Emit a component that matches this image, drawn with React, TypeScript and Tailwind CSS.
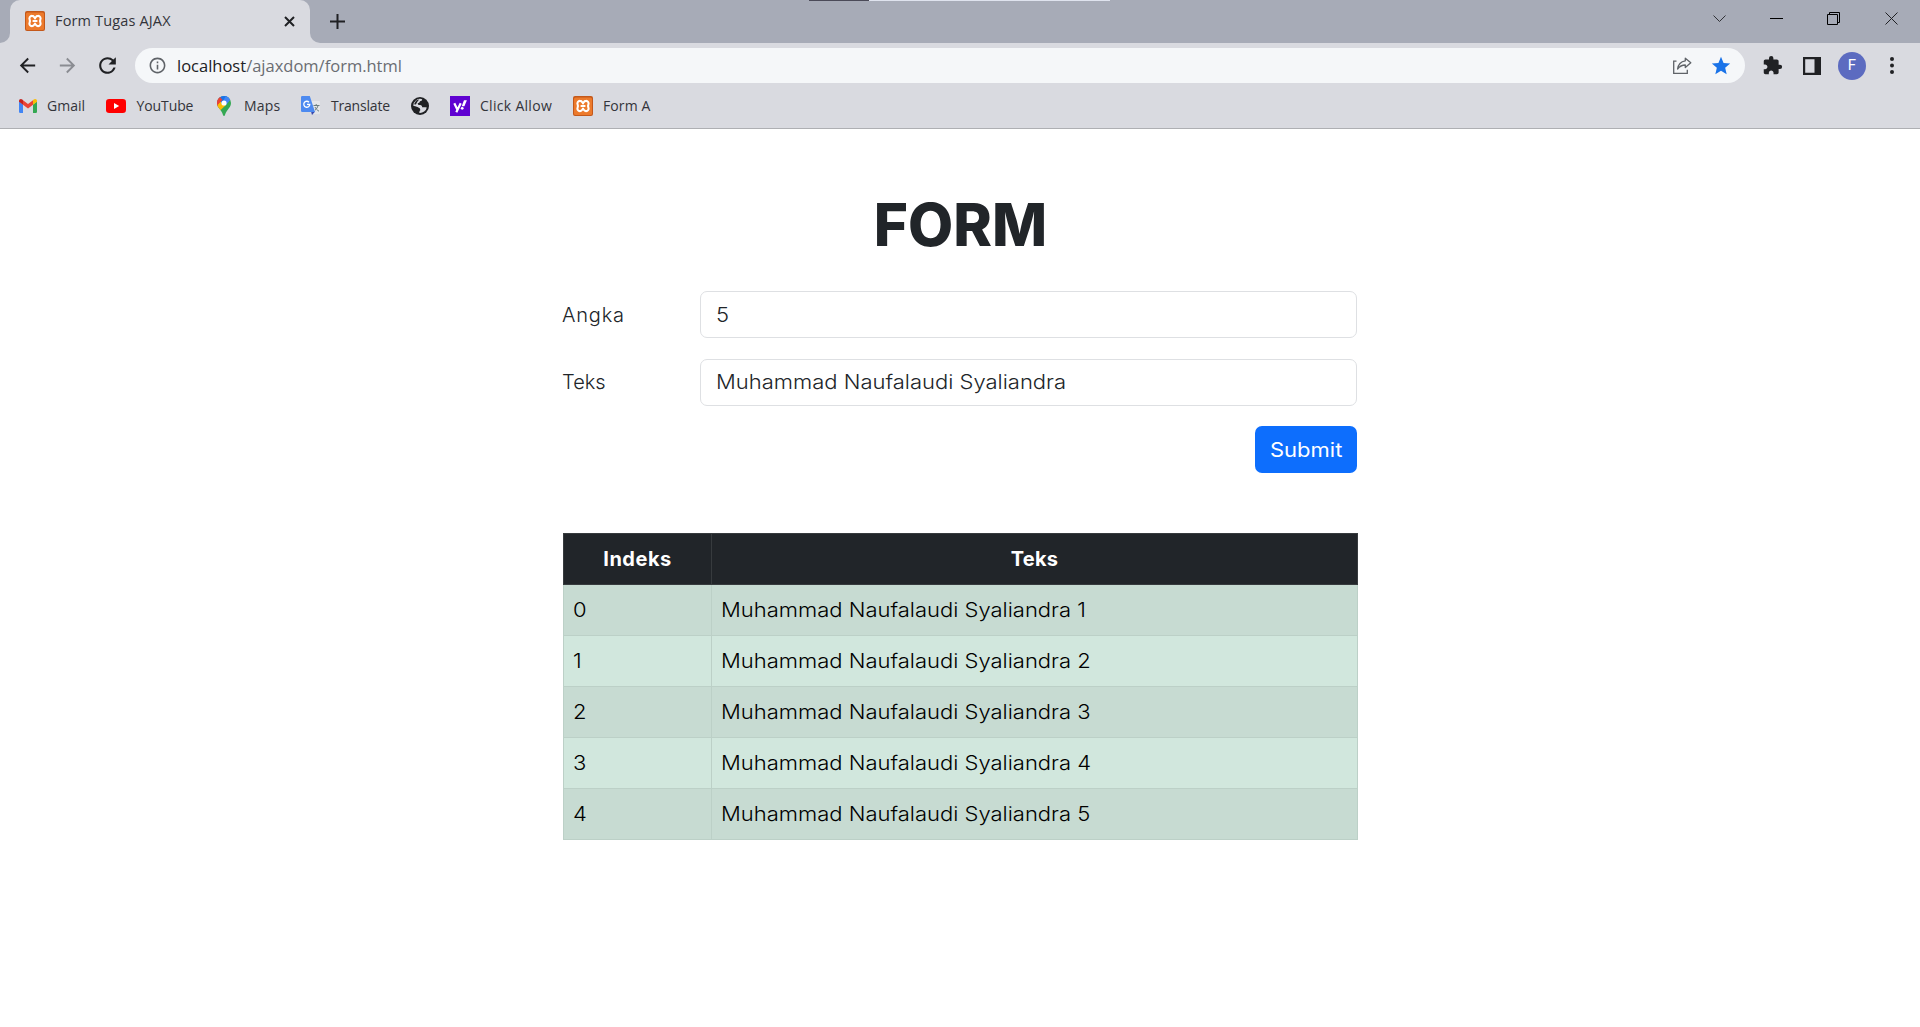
import React from 'react';
import { MdArrowBack, MdArrowForward, MdExtension, MdRefresh, MdStar, MdInfoOutline } from 'react-icons/md';

const XamppIcon = () => (
  <svg width="20" height="20" viewBox="0 0 20 20" className="shrink-0">
    <rect width="20" height="20" rx="2" fill="#c4581a" />
    <rect x="1" y="1.5" width="18" height="17.5" rx="1.5" fill="#ec7a2c" />
    <path
      d="M10 7.300C9.300 6.300 8.800 4.900 7 4.900a2.500 2.500 0 0 0-2.400 3.500c.4.900.4 2.300 0 3.200A2.500 2.500 0 0 0 7 15.100c1.800 0 2.300-1.400 3-2.400.7 1 1.200 2.400 3 2.400a2.500 2.500 0 0 0 2.400-3.500c-.4-.9-.4-2.300 0-3.200A2.500 2.500 0 0 0 13 4.900c-1.800 0-2.300 1.400-3 2.400z"
      fill="none"
      stroke="#fff"
      strokeWidth="2.100"
      strokeLinejoin="round"
    />
    <path d="M8.400 10h3.200" stroke="#fff" strokeWidth="2" strokeLinecap="round" />
  </svg>
);

const GmailIcon = () => (
  <svg width="18" height="14" viewBox="0 0 18 14" className="shrink-0">
    <path d="M0 2.500 4 5.500V14H1.200A1.200 1.200 0 0 1 0 12.800z" fill="#4285f4" />
    <path d="M18 2.500 14 5.500V14h2.800a1.200 1.200 0 0 0 1.200-1.200z" fill="#34a853" />
    <path d="M4 1.200 9 5l5-3.800v4.600L9 9.600 4 5.800z" fill="#ea4335" />
    <path d="M0 2C0 .2 2 -.5 3.300.6L4 1.200v4.600L0 2.800z" fill="#c5221f" />
    <path d="M18 2c0-1.800-2-2.500-3.300-1.400L14 1.200v4.600l4-3z" fill="#fbbc04" />
  </svg>
);

const YouTubeIcon = () => (
  <svg width="20" height="14" viewBox="0 0 20 14" className="shrink-0">
    <rect width="20" height="14" rx="3.200" fill="#f00" />
    <path d="M8 4v6l5.200-3z" fill="#fff" />
  </svg>
);

const MapsIcon = () => (
  <svg width="14" height="20" viewBox="0 0 14 20" className="shrink-0">
    <clipPath id="pin">
      <path d="M7 0a7 7 0 0 1 7 7c0 3-1.600 4.600-3.400 7C9 16.200 8.400 17.500 8 19c-.3 1.300-1.700 1.300-2 0-.4-1.500-1-2.800-2.600-5C1.600 11.600 0 10 0 7a7 7 0 0 1 7-7z" />
    </clipPath>
    <g clipPath="url(#pin)">
      <rect width="14" height="20" fill="#34a853" />
      <path d="M0 11 7 4l7-4v-2H0z" fill="#4285f4" />
      <path d="M0 0h3l5 5-8 8z" fill="#ea4335" />
      <path d="M-1 10.500 4.500 4.500 9 9l-6.500 6z" fill="#fbbc04" />
      <path d="M2 2 9-2l3.500 3.500L5 8z" fill="#1a73e8" />
      <path d="M0 0h2l3.500 4L-1 10z" fill="#ea4335" />
      <path d="M9.500-1 14 3 9 9 6 5z" fill="#4285f4" />
    </g>
    <circle cx="7" cy="7" r="2.600" fill="#fff" />
  </svg>
);

const TranslateIcon = () => (
  <svg width="19" height="20" viewBox="0 0 19 20" className="shrink-0">
    <path d="M8 5h10a1 1 0 0 1 1 1v11a1 1 0 0 1-1 1h-7z" fill="#e4e6e9" />
    <path d="M10 15.500h4.200L11 19z" fill="#3949ab" />
    <path d="M1.200 0h7.600L14 16H1.200A1.200 1.200 0 0 1 0 14.800V1.200A1.200 1.200 0 0 1 1.200 0z" fill="#4d8af0" />
    <path d="M8 6.200A3 3 0 1 0 8.800 8.400H6" fill="none" stroke="#fff" strokeWidth="1.300" />
    <path d="M12.500 9.500h6M15.200 8v1.500m1.800 0c-.5 2-1.500 3.500-3 4.700M14 11c.8 1.800 2.200 3.200 4 4.200" fill="none" stroke="#6b7e80" strokeWidth="1" />
  </svg>
);

const GlobeIcon = () => (
  <svg width="18" height="18" viewBox="0 0 18 18" className="shrink-0">
    <circle cx="9" cy="9" r="9" fill="#202124" />
    <path
      d="M11.200 2.200c-.2 1.500-.9 1.900-2.200 2-.5 1.600-1.300 1.700-2.300 2 .2 1.400.6 1.900 2.300 1.900 1.700.1 2 .9 2.200 2.100 1.700 0 3-.1 4.600.2a7 7 0 0 1-7.400 5.500c-.2-1.300.1-1.900.9-2.600-.1-1.900-.6-2.700-2.700-2.800L2.300 8.800A6.900 6.900 0 0 1 11.200 2.200z"
      fill="#d9dae0"
    />
    <path d="M2.300 9.200 6 9.800c1 .5 1.600 1 1.500 2-.9.800-1 2.600-.3 3.900A7 7 0 0 1 2.300 9.200z" fill="#202124" />
    <path d="M5.200 3.600 8.300 2.300 6.200 5 4.900 7.400 3 7.300z" fill="#202124" />
  </svg>
);

const YahooIcon = () => (
  <svg width="20" height="20" viewBox="0 0 20 20" className="shrink-0">
    <rect width="20" height="20" fill="#5f01d1" />
    <path d="m4.300 7.200 2.900 6M10.700 7.200 6.300 16.200" stroke="#fff" strokeWidth="2.200" fill="none" />
    <path d="m14 4.300h2.900l-2.500 6h-2.700z" fill="#fff" />
    <circle cx="12.200" cy="12.300" r="1.400" fill="#fff" />
  </svg>
);

const ShareIcon = () => (
  <svg width="19" height="17" viewBox="0 0 19 17" fill="none" stroke="#5f6368" strokeWidth="1.300" className="shrink-0">
    <path d="M3.500 4.200H.7v12.100h13.600v-3.500" />
    <path d="M12.300 1.200 17.800 5.800l-5.500 4.700V8C8.700 8 6.600 9.300 4.600 12c.5-4 3-7.500 7.700-8.200z" strokeLinejoin="round" />
  </svg>
);

const PanelIcon = () => (
  <svg width="18" height="18" viewBox="0 0 18 18" className="shrink-0">
    <path d="M0 0h18v18H0zM2.200 2.200v13.600h9.300V2.200z" fill="#202124" fillRule="evenodd" />
  </svg>
);

const bookmarks = [
  { icon: <GmailIcon />, label: 'Gmail', box: 'ml-[19px] w-[87px] gap-[10px]', text: '' },
  { icon: <YouTubeIcon />, label: 'YouTube', box: 'w-[111px] gap-[10.500px]', text: 'tracking-[-0.1px]' },
  { icon: <MapsIcon />, label: 'Maps', box: 'w-[84px] gap-[13px]', text: 'tracking-[0.2px]' },
  { icon: <TranslateIcon />, label: 'Translate', box: 'w-[110px] gap-[11px]', text: 'tracking-[-0.2px]' },
  { icon: <GlobeIcon />, label: '', box: 'w-[39px]', text: '' },
  { icon: <YahooIcon />, label: 'Click Allow', box: 'w-[123px] gap-[10px]', text: 'tracking-[0.3px]' },
  { icon: <XamppIcon />, label: 'Form A', box: 'gap-[10px]', text: 'tracking-[0.1px]' },
];

const TabStrip = () => (
  <header className="relative flex h-[43px] items-stretch bg-[#a7abb7]">
    <div className="absolute left-[809px] top-0 flex h-px w-[301px]">
      <div className="w-[60px] bg-[#4b4a58]" />
      <div className="flex-1 bg-[#dfe3ee]" />
    </div>
    <div className="flex w-[10px] items-end bg-[#d9dae0]">
      <div className="h-full w-full rounded-br-[10px] bg-[#a7abb7]" />
    </div>
    <div className="flex w-[300px] bg-[#a7abb7]">
      <div className="flex h-[43px] flex-1 items-center rounded-t-[10px] bg-[#d9dae0] px-[15px]">
        <div className="flex flex-1 items-center gap-[10px] pb-px">
          <XamppIcon />
          <span className="text-[14.500px] leading-5 tracking-[0.15px] text-[#33343a]">Form Tugas AJAX</span>
        </div>
        <svg width="11" height="11" viewBox="0 0 11 11" stroke="#202124" strokeWidth="2">
          <path d="m1 1 9 9M10 1l-9 9" />
        </svg>
      </div>
    </div>
    <div className="flex w-[10px] bg-[#d9dae0]">
      <div className="h-full w-full rounded-bl-[10px] bg-[#a7abb7]" />
    </div>
    <div className="flex flex-1 items-center justify-between pl-[10px] pr-[22px]">
      <svg width="15" height="15" viewBox="0 0 15 15" stroke="#202124" strokeWidth="2">
        <path d="M7.500 0v15M0 7.500h15" />
      </svg>
      <div className="flex items-center pb-[6px]">
        <svg width="13" height="8" viewBox="0 0 13 8" fill="none" stroke="#303136" className="mr-[44px]">
          <path d="m.5.500 6 6 6-6" />
        </svg>
        <svg width="13" height="13" viewBox="0 0 13 13" stroke="#000" className="mr-[44px]">
          <path d="M0 6.500h13" />
        </svg>
        <svg width="13" height="13" viewBox="0 0 13 13" fill="none" stroke="#000" className="mr-[45px]">
          <path d="M.5 2.500h10v10H.5zM2.500 2.500V.5h10v10h-2" />
        </svg>
        <svg width="13" height="13" viewBox="0 0 13 13" stroke="#202124">
          <path d="m.5.500 12 12M12.500.500l-12 12" />
        </svg>
      </div>
    </div>
  </header>
);

const Toolbar = () => (
  <div className="flex h-[45px] items-center pl-[16px] pr-[26px]">
    <MdArrowBack size={23} color="#202124" className="mr-[17px] shrink-0" />
    <MdArrowForward size={23} color="#8a8c92" className="mr-[16px] shrink-0" />
    <MdRefresh size={25} color="#202124" className="mr-[15px] shrink-0" />
    <div className="flex h-[35px] flex-1 items-center rounded-full bg-[#f5f7f9] px-[13px]">
      <MdInfoOutline size={19} color="#5f6368" className="shrink-0" />
      <span className="ml-[10px] flex-1 text-[16.500px] leading-6 text-[#6a6d72]">
        <span className="text-[#202124]">localhost</span>/ajaxdom/form.html
      </span>
      <ShareIcon />
      <MdStar size={22} color="#1a73e8" className="ml-[18px] shrink-0" />
    </div>
    <MdExtension size={21} color="#202124" className="ml-[17px] shrink-0" />
    <div className="ml-[20px]">
      <PanelIcon />
    </div>
    <div className="ml-[17px] flex size-[28px] items-center justify-center rounded-full bg-[#5c6bc0] font-[Roboto] text-[15px] leading-none text-white">
      F
    </div>
    <svg width="4" height="17" viewBox="0 0 4 17" fill="#202124" className="ml-[24px]">
      <circle cx="2" cy="2" r="2" />
      <circle cx="2" cy="8.500" r="2" />
      <circle cx="2" cy="15" r="2" />
    </svg>
  </div>
);

const BookmarksBar = () => (
  <nav className="flex h-[41px] items-center border-b border-[#aeafb3] pb-[4px] text-[14px] text-[#33343a]">
    {bookmarks.map((b, i) => (
      <div key={i} className={`flex items-center ${b.box}`}>
        {b.icon}
        {b.label && <span className={`whitespace-nowrap leading-5 ${b.text}`}>{b.label}</span>}
      </div>
    ))}
  </nav>
);

const Wide = ({ children }: { children: React.ReactNode }) => (
  <span className="inline-block origin-left scale-x-110 whitespace-nowrap">{children}</span>
);

const fields = [
  { label: 'Angka', labelText: 'tracking-[0.8px]', value: '5' },
  { label: 'Teks', labelText: '', value: 'Muhammad Naufalaudi Syaliandra' },
];

const rows = [1, 2, 3, 4, 5].map((n) => ({ index: n - 1, text: `Muhammad Naufalaudi Syaliandra ${n}` }));

export default function App() {
  return (
    <div className="flex h-[1027px] flex-col overflow-hidden bg-white font-['Open_Sans',sans-serif]">
      <TabStrip />
      <div className="bg-[#d9dae0]">
        <Toolbar />
        <BookmarksBar />
      </div>
      <main className="ml-[563px] w-[795px] pt-[60px] font-['Inter',sans-serif] text-[20px] font-[350] leading-[30px] text-[#212529]">
        <h1 className="text-center text-[58.500px] font-extrabold leading-[72px]">FORM</h1>
        <form className="mt-[30px] w-[794px]">
          {fields.map((f) => (
            <div key={f.label} className="mb-[20.500px] flex h-[47px] items-center">
              <label className={`-ml-px w-[138px] ${f.labelText}`}>{f.label}</label>
              <div className="flex h-[47px] flex-1 items-center rounded-[7px] border border-[#dee0e3] px-[15px]">
                <Wide>{f.value}</Wide>
              </div>
            </div>
          ))}
          <div className="flex justify-end">
            <button
              type="button"
              className="flex h-[47px] w-[102px] items-center rounded-[7px] bg-[#0d6efd] pl-[15px] font-normal text-white"
            >
              <Wide>Submit</Wide>
            </button>
          </div>
        </form>
        <table className="mt-[60px] w-[795px] table-fixed border-collapse text-black">
          <thead>
            <tr className="h-[51px] bg-[#212529] text-white">
              <th className="w-[148px] border border-[#373b3e] font-bold tracking-[0.5px]">Indeks</th>
              <th className="border border-[#373b3e] font-bold tracking-[0.3px]">Teks</th>
            </tr>
          </thead>
          <tbody>
            {rows.map((r) => (
              <tr key={r.index} className="h-[51px] odd:bg-[#c7dbd2] even:bg-[#d1e7dd]">
                <td className="border border-[#bcd0c7] px-[9px]">
                  <Wide>{r.index}</Wide>
                </td>
                <td className="border border-[#bcd0c7] px-[9px]">
                  <Wide>{r.text}</Wide>
                </td>
              </tr>
            ))}
          </tbody>
        </table>
      </main>
    </div>
  );
}
